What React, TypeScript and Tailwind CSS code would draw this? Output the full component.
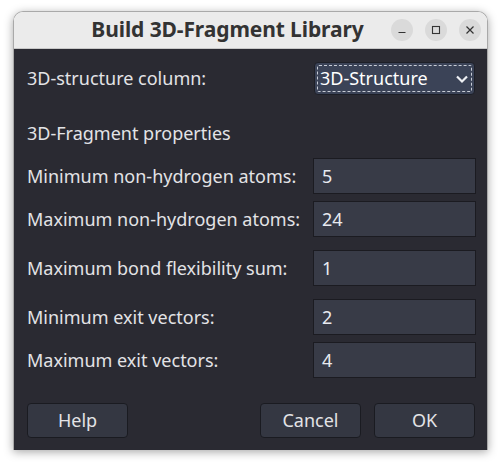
import React from "react";

const font = { fontFamily: '"Noto Sans", "Open Sans", sans-serif' };

function Field({ label, value, className = "" }: { label: string; value: string; className?: string }) {
  return (
    <div className={`flex items-center ${className}`}>
      <div className="flex-1 pl-[13px] text-[18px] text-[#e3e3e6]">{label}</div>
      <div className="w-[163px] h-[36px] bg-[#383b47] border border-[#1b1b21] flex items-center pl-[8px] text-[18px] text-[#e8eaf0]">
        {value}
      </div>
    </div>
  );
}

export default function App() {
  return (
    <div className="w-[502px] h-[467px] bg-white relative" style={font}>
      <div className="absolute left-[13px] top-[11px] w-[475px] h-[439px] rounded-t-[10px] overflow-hidden shadow-[0_2px_10px_rgba(0,0,0,0.35)] border border-[#a9a9a9] border-b-0 flex flex-col">
        <div className="h-[37px] bg-[#ebebeb] border-b border-[#c8c8c8] flex items-center relative shrink-0">
          <div className="absolute left-0 right-0 text-center pr-[46px] text-[21px] font-bold text-[#333333] tracking-[-0.1px]" style={{ fontFamily: '"Noto Sans", sans-serif' }}>
            Build 3D-Fragment Library
          </div>
          <div className="ml-auto mr-[6px] flex gap-[12px] relative">
            <div className="w-[22px] h-[22px] rounded-full bg-[#dadada] flex items-center justify-center">
              <svg width="10" height="10" viewBox="0 0 10 10"><path d="M1.5 7.5h7" stroke="#333" strokeWidth="1.2" /></svg>
            </div>
            <div className="w-[22px] h-[22px] rounded-full bg-[#dadada] flex items-center justify-center">
              <svg width="10" height="10" viewBox="0 0 10 10"><rect x="1.5" y="1.5" width="7" height="7" fill="none" stroke="#333" strokeWidth="1.1" /></svg>
            </div>
            <div className="w-[22px] h-[22px] rounded-full bg-[#dadada] flex items-center justify-center">
              <svg width="10" height="10" viewBox="0 0 10 10"><path d="M1.5 1.5l7 7M8.5 1.5l-7 7" stroke="#333" strokeWidth="1.2" /></svg>
            </div>
          </div>
        </div>
        <div className="flex-1 bg-[#2a2a32] flex flex-col pt-[13px] pr-[11px]">
          <div className="flex items-center h-[33px]">
            <div className="flex-1 pl-[13px] text-[18px] text-[#e3e3e6]">3D-structure column:</div>
            <div className="w-[161px] h-[33px] rounded-[4px] bg-[#3b4357] border border-[#1d1f27] p-[2px] mr-[1px]">
              <div className="w-full h-full border border-dashed border-[#c8ccd6] rounded-[2px] flex items-center pl-[2px] pr-[2px] text-[18px] text-white">
                <span className="flex-1">3D-Structure</span>
                <svg width="14" height="10" viewBox="0 0 14 10"><path d="M2 2.5l5 5 5-5" fill="none" stroke="#eef0f4" strokeWidth="2.2" /></svg>
              </div>
            </div>
          </div>
          <div className="mt-[26px] h-[24px] flex items-center pl-[13px] text-[18px] text-[#e3e3e6]">3D-Fragment properties</div>
          <Field className="mt-[13px]" label="Minimum non-hydrogen atoms:" value="5" />
          <Field className="mt-[7px]" label="Maximum non-hydrogen atoms:" value="24" />
          <Field className="mt-[13px]" label="Maximum bond flexibility sum:" value="1" />
          <Field className="mt-[13px]" label="Minimum exit vectors:" value="2" />
          <Field className="mt-[7px]" label="Maximum exit vectors:" value="4" />
          <div className="mt-[25px] flex pl-[13px] pr-[1px] text-[18px] text-[#e3e3e6]">
            <button className="w-[101px] h-[35px] rounded-[4px] bg-[#343742] border border-[#1a1b21]">Help</button>
            <div className="flex-1" />
            <button className="w-[101px] h-[35px] rounded-[4px] bg-[#343742] border border-[#1a1b21]">Cancel</button>
            <button className="ml-[13px] w-[101px] h-[35px] rounded-[4px] bg-[#343742] border border-[#1a1b21]">OK</button>
          </div>
        </div>
      </div>
    </div>
  );
}
